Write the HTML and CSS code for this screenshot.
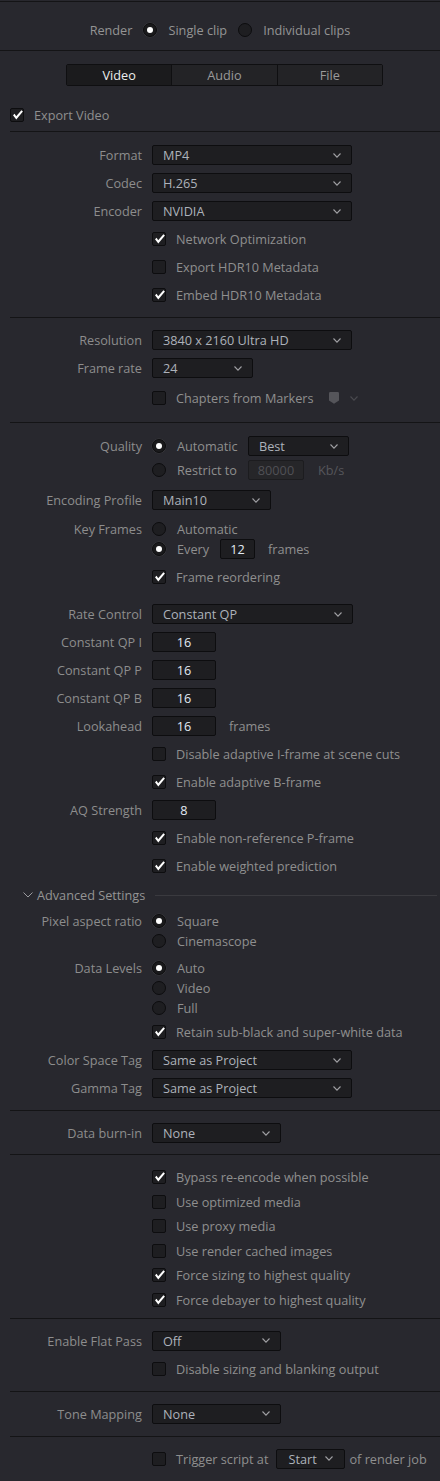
FILE: index.html
```html
<!DOCTYPE html>
<html>
<head>
<meta charset="utf-8">
<link rel="stylesheet" href="styles.css">
</head>
<body>
<div class="panel">
  <section class="sec head">
    <div class="render-row">
      <span>Render</span>
      <span class="rd on"></span><span>Single clip</span>
      <span class="rd"></span><span>Individual clips</span>
    </div>
  </section>
  <div class="rule full"></div>

  <section class="sec tabsec">
    <div class="tabs">
      <div class="tab on">Video</div>
      <div class="tab">Audio</div>
      <div class="tab">File</div>
    </div>
    <div class="export-row">
      <span class="cb"><svg viewBox="1 1 12 12"><polygon points="3,7.2 4.6,5.8 6.2,8.2 11.4,2.2 12.9,3.5 6.3,11.6"/></svg></span>
      <span>Export Video</span>
    </div>
  </section>
  <div class="rule"></div>

  <section class="sec p9-8">
    <div class="row"><span class="lbl">Format</span><div class="dd w200"><span>MP4</span><svg class="chev" viewBox="0 0 8 5"><path d="M0.5 0.5 L4 4.2 L7.5 0.5"/></svg></div></div>
    <div class="row"><span class="lbl">Codec</span><div class="dd w200"><span>H.265</span><svg class="chev" viewBox="0 0 8 5"><path d="M0.5 0.5 L4 4.2 L7.5 0.5"/></svg></div></div>
    <div class="row"><span class="lbl">Encoder</span><div class="dd w200"><span>NVIDIA</span><svg class="chev" viewBox="0 0 8 5"><path d="M0.5 0.5 L4 4.2 L7.5 0.5"/></svg></div></div>
    <div class="row ind"><span class="cb"><svg viewBox="1 1 12 12"><polygon points="3,7.2 4.6,5.8 6.2,8.2 11.4,2.2 12.9,3.5 6.3,11.6"/></svg></span><span>Network Optimization</span></div>
    <div class="row ind"><span class="cb"></span><span>Export HDR10 Metadata</span></div>
    <div class="row ind"><span class="cb"><svg viewBox="1 1 12 12"><polygon points="3,7.2 4.6,5.8 6.2,8.2 11.4,2.2 12.9,3.5 6.3,11.6"/></svg></span><span>Embed HDR10 Metadata</span></div>
  </section>
  <div class="rule"></div>

  <section class="sec p8-10">
    <div class="row"><span class="lbl">Resolution</span><div class="dd w200"><span>3840 x 2160 Ultra HD</span><svg class="chev" viewBox="0 0 8 5"><path d="M0.5 0.5 L4 4.2 L7.5 0.5"/></svg></div></div>
    <div class="row"><span class="lbl">Frame rate</span><div class="dd w101"><span>24</span><svg class="chev" viewBox="0 0 8 5"><path d="M0.5 0.5 L4 4.2 L7.5 0.5"/></svg></div></div>
    <div class="row ind mt2"><span class="cb"></span><span>Chapters from Markers</span>
      <svg class="marker" viewBox="0 0 10 12"><path d="M0 1.2 Q0 0 1.2 0 H8.8 Q10 0 10 1.2 V8.5 L5 11.8 L0 8.5 Z"/></svg>
      <svg class="chev dim" viewBox="0 0 8 5"><path d="M0.5 0.5 L4 4.2 L7.5 0.5"/></svg>
    </div>
  </section>
  <div class="rule"></div>

  <section class="sec p9-8">
    <div class="row"><span class="lbl">Quality</span><span class="rd on"></span><span class="opt">Automatic</span><div class="dd w101"><span>Best</span><svg class="chev" viewBox="0 0 8 5"><path d="M0.5 0.5 L4 4.2 L7.5 0.5"/></svg></div></div>
    <div class="row sub ind"><span class="rd"></span><span class="opt">Restrict to</span><div class="num off w56">80000</div><span class="unit">Kb/s</span></div>
    <div class="row mt6"><span class="lbl">Encoding Profile</span><div class="dd w119"><span>Main10</span><svg class="chev" viewBox="0 0 8 5"><path d="M0.5 0.5 L4 4.2 L7.5 0.5"/></svg></div></div>
    <div class="row sub mt5"><span class="lbl">Key Frames</span><span class="rd"></span><span>Automatic</span></div>
    <div class="row sub ind"><span class="rd on"></span><span class="every">Every</span><div class="num w35">12</div><span class="after">frames</span></div>
    <div class="row ind mt4"><span class="cb"><svg viewBox="1 1 12 12"><polygon points="3,7.2 4.6,5.8 6.2,8.2 11.4,2.2 12.9,3.5 6.3,11.6"/></svg></span><span>Frame reordering</span></div>
    <div class="row mt9"><span class="lbl">Rate Control</span><div class="dd w201"><span>Constant QP</span><svg class="chev" viewBox="0 0 8 5"><path d="M0.5 0.5 L4 4.2 L7.5 0.5"/></svg></div></div>
    <div class="row"><span class="lbl">Constant QP I</span><div class="num w64">16</div></div>
    <div class="row"><span class="lbl">Constant QP P</span><div class="num w64">16</div></div>
    <div class="row"><span class="lbl">Constant QP B</span><div class="num w64">16</div></div>
    <div class="row"><span class="lbl">Lookahead</span><div class="num w64">16</div><span class="after">frames</span></div>
    <div class="row ind"><span class="cb"></span><span>Disable adaptive I-frame at scene cuts</span></div>
    <div class="row ind"><span class="cb"><svg viewBox="1 1 12 12"><polygon points="3,7.2 4.6,5.8 6.2,8.2 11.4,2.2 12.9,3.5 6.3,11.6"/></svg></span><span>Enable adaptive B-frame</span></div>
    <div class="row"><span class="lbl">AQ Strength</span><div class="num w64">8</div></div>
    <div class="row ind"><span class="cb"><svg viewBox="1 1 12 12"><polygon points="3,7.2 4.6,5.8 6.2,8.2 11.4,2.2 12.9,3.5 6.3,11.6"/></svg></span><span>Enable non-reference P-frame</span></div>
    <div class="row ind"><span class="cb"><svg viewBox="1 1 12 12"><polygon points="3,7.2 4.6,5.8 6.2,8.2 11.4,2.2 12.9,3.5 6.3,11.6"/></svg></span><span>Enable weighted prediction</span></div>

    <div class="row adv mt1">
      <svg class="advchev" viewBox="0 0 10 6"><path d="M0.5 0.5 L5 5 L9.5 0.5"/></svg>
      <span class="advtxt">Advanced Settings</span>
      <span class="advline"></span>
    </div>
    <div class="row sub mt2"><span class="lbl">Pixel aspect ratio</span><span class="rd on"></span><span>Square</span></div>
    <div class="row sub ind"><span class="rd"></span><span>Cinemascope</span></div>
    <div class="row sub mt7"><span class="lbl">Data Levels</span><span class="rd on"></span><span>Auto</span></div>
    <div class="row sub ind"><span class="rd"></span><span>Video</span></div>
    <div class="row sub ind"><span class="rd"></span><span>Full</span></div>
    <div class="row ind"><span class="cb"><svg viewBox="1 1 12 12"><polygon points="3,7.2 4.6,5.8 6.2,8.2 11.4,2.2 12.9,3.5 6.3,11.6"/></svg></span><span>Retain sub-black and super-white data</span></div>
    <div class="row"><span class="lbl">Color Space Tag</span><div class="dd w200"><span>Same as Project</span><svg class="chev" viewBox="0 0 8 5"><path d="M0.5 0.5 L4 4.2 L7.5 0.5"/></svg></div></div>
    <div class="row"><span class="lbl">Gamma Tag</span><div class="dd w200"><span>Same as Project</span><svg class="chev" viewBox="0 0 8 5"><path d="M0.5 0.5 L4 4.2 L7.5 0.5"/></svg></div></div>
  </section>
  <div class="rule"></div>

  <section class="sec p8-7">
    <div class="row"><span class="lbl">Data burn-in</span><div class="dd w129"><span>None</span><svg class="chev" viewBox="0 0 8 5"><path d="M0.5 0.5 L4 4.2 L7.5 0.5"/></svg></div></div>
  </section>
  <div class="rule"></div>

  <section class="sec opts">
    <div class="row tight ind"><span class="cb"><svg viewBox="1 1 12 12"><polygon points="3,7.2 4.6,5.8 6.2,8.2 11.4,2.2 12.9,3.5 6.3,11.6"/></svg></span><span>Bypass re-encode when possible</span></div>
    <div class="row tight ind"><span class="cb"></span><span>Use optimized media</span></div>
    <div class="row tight ind"><span class="cb"></span><span>Use proxy media</span></div>
    <div class="row tight ind"><span class="cb"></span><span>Use render cached images</span></div>
    <div class="row tight ind"><span class="cb"><svg viewBox="1 1 12 12"><polygon points="3,7.2 4.6,5.8 6.2,8.2 11.4,2.2 12.9,3.5 6.3,11.6"/></svg></span><span>Force sizing to highest quality</span></div>
    <div class="row tight ind"><span class="cb"><svg viewBox="1 1 12 12"><polygon points="3,7.2 4.6,5.8 6.2,8.2 11.4,2.2 12.9,3.5 6.3,11.6"/></svg></span><span>Force debayer to highest quality</span></div>
  </section>
  <div class="rule"></div>

  <section class="sec p8-8">
    <div class="row"><span class="lbl">Enable Flat Pass</span><div class="dd w129"><span>Off</span><svg class="chev" viewBox="0 0 8 5"><path d="M0.5 0.5 L4 4.2 L7.5 0.5"/></svg></div></div>
    <div class="row ind"><span class="cb"></span><span>Disable sizing and blanking output</span></div>
  </section>
  <div class="rule"></div>

  <section class="sec p8-8">
    <div class="row"><span class="lbl">Tone Mapping</span><div class="dd w129"><span>None</span><svg class="chev" viewBox="0 0 8 5"><path d="M0.5 0.5 L4 4.2 L7.5 0.5"/></svg></div></div>
  </section>
  <div class="rule"></div>

  <section class="sec p8-8">
    <div class="row ind"><span class="cb"></span><span>Trigger script at</span><div class="dd w69 start"><span>Start</span><svg class="chev" viewBox="0 0 8 5"><path d="M0.5 0.5 L4 4.2 L7.5 0.5"/></svg></div><span class="ofjob">of render job</span></div>
  </section>
</div>
</body>
</html>
```
FILE: styles.css
```css
* { box-sizing: border-box; }
html, body { margin: 0; padding: 0; background: #28282e; }
body {
  width: 440px;
  font-family: "Open Sans", "Noto Sans", sans-serif;
  font-size: 12.7px;
  color: #8f8f8f;
}
.panel { margin-top: 1px; border-top: 1px solid #141416; }
.sec { display: flex; flex-direction: column; }
.rule { height: 1px; background: #141416; margin-left: 10px; }
.rule.full { margin-left: 0; }

.head { padding: 18px 0 10px; }
.render-row { height: 20px; display: flex; align-items: center; justify-content: center; gap: 11px; }
.render-row .rd { margin-right: 0; }
.render-row span:not(.rd) { color: #949494; }

.tabsec { padding: 13px 0 6px; }
.tabs { display: flex; margin-left: 66px; width: 317px; height: 22px; border: 1px solid #0f0f11; border-radius: 2px; }
.tab { flex: 1; display: flex; align-items: center; justify-content: center; background: #232326; color: #9a9a9a; }
.tab + .tab { border-left: 1px solid #0f0f11; }
.tab.on { background: #1b1b1d; color: #ededed; }
.export-row { margin-top: 19px; height: 20px; display: flex; align-items: center; padding-left: 10px; }

.p9-8 { padding: 9px 0 8px; }
.p8-10 { padding: 8px 0 10px; }
.p8-7 { padding: 8px 0 7px; }
.p8-8 { padding: 8px 0 8px; }
.opts { padding: 9.7px 0 5.7px; }

.row { display: flex; align-items: center; height: 28px; white-space: nowrap; }
.row.sub { height: 20px; }
.row.tight { height: 24.6px; }
.row.ind { padding-left: 152px; }
.mt1 { margin-top: 1px; }
.mt2 { margin-top: 2px; }
.mt4 { margin-top: 4px; }
.mt5 { margin-top: 5px; }
.mt6 { margin-top: 6px; }
.mt7 { margin-top: 7px; }
.mt9 { margin-top: 9px; }

.lbl { flex: none; width: 152px; padding-right: 10px; text-align: right; color: #8d8d8d; }

.cb {
  flex: none; width: 14px; height: 14px; margin-right: 10px;
  background: #1e1e21; border: 1px solid #0d0d0f; border-radius: 2px;
  display: flex;
}
.cb svg { width: 12px; height: 12px; display: block; }
.cb polygon { fill: #ffffff; }

.rd {
  flex: none; width: 14px; height: 14px; margin-right: 11px;
  border-radius: 50%; background: #1e1e21; border: 1px solid #0c0c0e;
  display: flex; align-items: center; justify-content: center;
}
.rd.on { background: #1a1a1c; box-shadow: 0 0 0 0.5px #3a3a3e; }
.rd.on::after { content: ""; width: 6px; height: 6px; border-radius: 50%; background: #ffffff; }

.dd {
  flex: none; height: 20px;
  background: #1e1e21; border: 1px solid #0d0d0f; border-radius: 2px;
  display: flex; align-items: center; justify-content: space-between;
  padding: 0 10px 0 10px; color: #adb2ba;
}
.w200 { width: 200px; }
.w201 { width: 201px; }
.w101 { width: 101px; }
.w119 { width: 119px; }
.w129 { width: 129px; }
.w69 { width: 69px; }
.w64 { width: 64px; }
.w56 { width: 56px; }
.w35 { width: 35px; }

.chev { width: 8px; height: 5px; flex: none; }
.chev path { fill: none; stroke: #a0a0a4; stroke-width: 1.1; }
.chev.dim { margin-left: 11px; }
.chev.dim path { stroke: #4a4a4f; }
.marker { width: 10px; height: 12px; margin-left: 15px; }
.marker path { fill: #55555a; }

.num {
  flex: none; height: 20px;
  background: #1e1e21; border: 1px solid #0d0d0f; border-radius: 2px;
  display: flex; align-items: center; justify-content: center;
  color: #e2eaf3;
}
.num.off { background: #262629; border-color: #1c1c1f; color: #505055; }
.opt { width: 71px; flex: none; }
.unit { margin-left: 14px; color: #56565b; }
.every { width: 43px; flex: none; }
.after { margin-left: 13px; }

.adv { padding-left: 23px; }
.advchev { width: 10px; height: 6px; flex: none; }
.advchev path { fill: none; stroke: #9a9a9e; stroke-width: 1; }
.advtxt { margin-left: 4px; color: #949494; }
.advline { flex: 1; height: 1px; background: #3a3a3f; margin: 0 3px 0 10px; }

.start { margin-left: 8px; padding: 0 11px; }
.ofjob { margin-left: 4px; }
```
